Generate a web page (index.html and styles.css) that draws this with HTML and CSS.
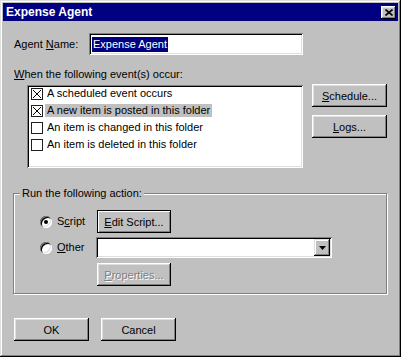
FILE: index.html
```html
<!DOCTYPE html>
<html lang="en">

<head>
    <meta charset="UTF-8">
    <title>Expense Agent</title>
    <link rel="stylesheet" href="styles.css">
</head>

<body>

    <div class="window">
        <div class="titlebar">
            <span class="title">Expense Agent</span>
            <button class="close">
                <svg width="8" height="7" viewBox="0 0 8 7">
                    <path d="M0.5 0.5L7.5 6.5M7.5 0.5L0.5 6.5" stroke="#000" stroke-width="1.6" fill="none" />
                </svg>
            </button>
        </div>

        <div class="name-row">
            <span class="name-label">Agent <u>N</u>ame:</span>
            <div class="textbox"><span class="sel">Expense Agent</span></div>
        </div>

        <div class="events-label"><u>W</u>hen the following event(s) occur:</div>

        <div class="events-row">
            <div class="listbox">
                <div class="item"><span class="check on"></span><span class="text">A scheduled event occurs</span></div>
                <div class="item"><span class="check on"></span><span class="text selected">A new item is posted in this folder</span></div>
                <div class="item"><span class="check"></span><span class="text">An item is changed in this folder</span></div>
                <div class="item"><span class="check"></span><span class="text">An item is deleted in this folder</span></div>
            </div>
            <div class="side-buttons">
                <button class="btn"><u>S</u>chedule...</button>
                <button class="btn"><u>L</u>ogs...</button>
            </div>
        </div>

        <div class="group">
            <span class="legend">Run the following action:</span>
            <div class="action-row">
                <span class="radio-cell"><span class="radio checked"></span>S<u>c</u>ript</span>
                <button class="btn default"><u>E</u>dit Script...</button>
            </div>
            <div class="action-row other">
                <span class="radio-cell"><span class="radio"></span><u>O</u>ther</span>
                <div class="combo">
                    <span class="drop">
                        <svg width="7" height="4" viewBox="0 0 7 4">
                            <path d="M0 0H7L3.5 4Z" fill="#000" />
                        </svg>
                    </span>
                </div>
            </div>
            <div class="action-row props">
                <span class="radio-cell"></span>
                <button class="btn disabled"><u>P</u>roperties...</button>
            </div>
        </div>

        <div class="footer">
            <button class="btn">OK</button>
            <button class="btn">Cancel</button>
        </div>
    </div>

</body>

</html>
```

FILE: styles.css
```css
* {
    padding: 0;
    margin: 0;
    box-sizing: border-box;
}

body {
    background: #c0c0c0;
    font-family: "Liberation Sans", Arial, sans-serif;
    font-size: 11px;
    line-height: 13px;
    color: #000;
}

u {
    text-decoration: underline;
    text-underline-offset: 1px;
}

.window {
    width: 401px;
    height: 357px;
    padding: 3px;
    background: #c0c0c0;
    box-shadow: inset -1px -1px #000, inset 1px 1px #dfdfdf, inset -2px -2px #808080, inset 2px 2px #fff;
}

.titlebar {
    height: 18px;
    background: #000080;
    color: #fff;
    display: flex;
    align-items: center;
    justify-content: space-between;
    padding: 0 2px 0 3px;
}

.title {
    font-weight: bold;
    font-size: 12px;
}

.close {
    width: 15px;
    height: 13px;
    border: none;
    background: #c0c0c0;
    display: flex;
    align-items: center;
    justify-content: center;
    box-shadow: inset -1px -1px #000, inset 1px 1px #fff, inset -2px -2px #808080, inset 2px 2px #dfdfdf;
}

.btn {
    width: 75px;
    height: 23px;
    border: none;
    background: #c0c0c0;
    font-family: inherit;
    font-size: 11px;
    color: #000;
    box-shadow: inset -1px -1px #000, inset 1px 1px #fff, inset -2px -2px #808080, inset 2px 2px #dfdfdf;
}

.btn.default {
    width: 74px;
    box-shadow: inset 0 0 0 1px #000, inset 2px 2px #fff, inset -2px -2px #808080;
}

.btn.disabled {
    width: 74px;
    color: #808080;
    text-shadow: 1px 1px #fff;
}

.name-row {
    margin-top: 12px;
    padding-left: 11px;
    display: flex;
    align-items: center;
}

.name-label {
    width: 75px;
}

.textbox {
    width: 214px;
    height: 22px;
    background: #fff;
    padding-left: 3px;
    display: flex;
    align-items: center;
    box-shadow: inset 1px 1px #808080, inset -1px -1px #fff, inset 2px 2px #000, inset -2px -2px #dfdfdf;
}

.sel {
    background: #000080;
    color: #fff;
    padding: 1px 1px;
}

.events-label {
    margin-top: 13px;
    padding-left: 11px;
}

.events-row {
    margin-top: 3px;
    padding-left: 24px;
    display: flex;
    align-items: flex-start;
    gap: 9px;
}

.listbox {
    margin-top: 1px;
    width: 276px;
    height: 83px;
    background: #fff;
    padding-left: 4px;
    box-shadow: inset 1px 1px #808080, inset -1px -1px #fff, inset 2px 2px #000, inset -2px -2px #dfdfdf;
}

.item {
    height: 17px;
    display: flex;
    align-items: center;
}

.check {
    width: 12px;
    height: 12px;
    margin-right: 2px;
    border: 1px solid #202020;
    background: #fff;
}

.check.on {
    background:
        linear-gradient(45deg, transparent calc(50% - 0.6px), #000 calc(50% - 0.6px), #000 calc(50% + 0.6px), transparent calc(50% + 0.6px)),
        linear-gradient(-45deg, transparent calc(50% - 0.6px), #000 calc(50% - 0.6px), #000 calc(50% + 0.6px), transparent calc(50% + 0.6px)),
        #fff;
    background-size: 8px 8px, 8px 8px, auto;
    background-position: center, center;
    background-repeat: no-repeat;
}

.text {
    padding: 0 2px;
}

.text.selected {
    background: #c0c0c0;
}

.side-buttons {
    display: flex;
    flex-direction: column;
    gap: 8px;
}

.group {
    position: relative;
    margin: 25px 0 0 10px;
    width: 374px;
    height: 101px;
    border: 1px solid #808080;
    padding: 16px 0 0 26px;
    box-shadow: 1px 1px 0 #fff, inset 1px 1px 0 #fff;
}

.legend {
    position: absolute;
    top: -7px;
    left: 6px;
    padding: 0 2px;
    background: #c0c0c0;
}

.action-row {
    display: flex;
    align-items: center;
}

.action-row.other {
    margin-top: 4px;
}

.action-row.props {
    margin-top: 5px;
}

.radio-cell {
    width: 57px;
    display: flex;
    align-items: center;
}

.radio {
    position: relative;
    width: 12px;
    height: 12px;
    margin-right: 5px;
    border-radius: 50%;
    background: #fff;
    box-shadow: inset 1px 1px #808080, inset -1px -1px #fff, inset 2px 2px #000, inset -2px -2px #dfdfdf;
}

.radio.checked::after {
    content: "";
    position: absolute;
    left: 4px;
    top: 4px;
    width: 4px;
    height: 4px;
    border-radius: 50%;
    background: #000;
}

.combo {
    margin-left: -1px;
    width: 236px;
    height: 21px;
    background: #fff;
    display: flex;
    justify-content: flex-end;
    align-items: center;
    padding-right: 2px;
    box-shadow: inset 1px 1px #808080, inset -1px -1px #fff, inset 2px 2px #000, inset -2px -2px #dfdfdf;
}

.drop {
    width: 16px;
    height: 17px;
    background: #c0c0c0;
    display: flex;
    align-items: center;
    justify-content: center;
    box-shadow: inset -1px -1px #000, inset 1px 1px #dfdfdf, inset -2px -2px #808080, inset 2px 2px #fff;
}

.footer {
    margin-top: 24px;
    padding-left: 11px;
    display: flex;
    gap: 12px;
}
```
